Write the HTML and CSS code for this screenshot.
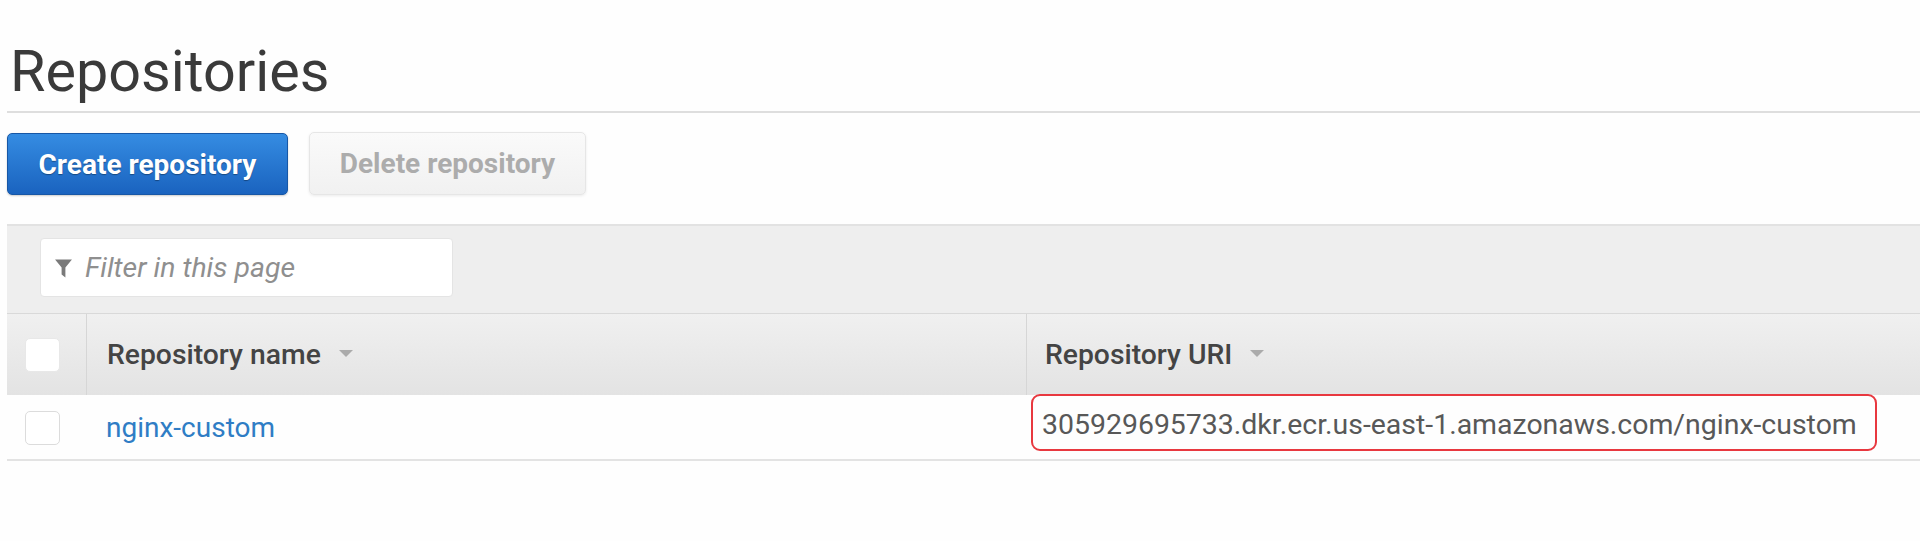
FILE: index.html
```html
<!DOCTYPE html>
<html lang="en">
<head>
<meta charset="utf-8">
<title>Repositories</title>
<link rel="stylesheet" href="styles.css">
</head>
<body>
<div class="page">
  <h1 class="title">Repositories</h1>
  <div class="actions">
    <button class="btn btn-primary">Create repository</button>
    <button class="btn btn-disabled">Delete repository</button>
  </div>
  <div class="table">
    <div class="toolbar">
      <div class="filter">
        <svg class="filter-icon" viewBox="0 0 16 18" width="17" height="19"><path d="M0 0.5 H16 L9.8 8 V17.5 L6.2 14.8 V8 Z" fill="#7a7a7a"/></svg>
        <span class="filter-text">Filter in this page</span>
      </div>
    </div>
    <div class="row head">
      <div class="cell cell-check"><span class="check check-head"></span></div>
      <div class="cell cell-name"><span class="th">Repository name</span><span class="caret"></span></div>
      <div class="cell cell-uri"><span class="th">Repository URI</span><span class="caret"></span></div>
    </div>
    <div class="row data">
      <div class="cell cell-check"><span class="check"></span></div>
      <div class="cell cell-name"><a class="link" href="#">nginx-custom</a></div>
      <div class="cell cell-uri"><span class="uri">305929695733.dkr.ecr.us-east-1.amazonaws.com/nginx-custom</span></div>
    </div>
  </div>
</div>
</body>
</html>
```

FILE: styles.css
```css
* { box-sizing: border-box; }
html, body { margin: 0; padding: 0; background: #fefefe; }
body { font-family: Roboto, "Liberation Sans", Arial, sans-serif; color: #444; overflow: hidden; }

.page { padding-left: 7px; }

.title {
  margin: 38px 0 0;
  padding: 0 0 5px 3px;
  font-size: 57.5px;
  line-height: 68px;
  font-weight: 400;
  color: #3a3a3a;
  border-bottom: 2px solid #dedede;
}

.actions { display: flex; gap: 21px; margin-top: 20px; }

.btn {
  height: 62px;
  padding: 0;
  font-family: Roboto, "Liberation Sans", Arial, sans-serif;
  font-size: 28px;
  font-weight: 700;
  border-radius: 5px;
  display: flex;
  align-items: center;
  justify-content: center;
}
.btn-primary {
  width: 281px;
  color: #fff;
  background: linear-gradient(#358ce2, #1a63bf);
  border: 1px solid #1757a6;
  text-shadow: 0 1px 1px rgba(0,0,0,0.35);
  box-shadow: 0 1px 2px rgba(0,0,0,0.2);
}
.btn-disabled {
  width: 277px;
  height: 63px;
  margin-top: -1px;
  color: #acacac;
  background: linear-gradient(#fafafa, #f1f1f1);
  border: 1px solid #e6e6e6;
  box-shadow: 0 1px 3px rgba(0,0,0,0.08);
}

.table { margin-top: 29px; }

.toolbar {
  height: 89px;
  border-top: 2px solid #e2e2e2;
  background: #eeeeee;
  padding: 12px 0 0 33px;
}
.filter {
  width: 413px;
  height: 59px;
  background: #fff;
  border: 1px solid #e4e4e4;
  border-radius: 4px;
  display: flex;
  align-items: center;
  padding-left: 14px;
  gap: 13px;
}
.filter-icon { flex: none; margin-top: 1px; }
.filter-text {
  font-size: 28.4px;
  font-style: italic;
  color: #8f8f8f;
}

.row {
  display: grid;
  grid-template-columns: 79px 940px 1fr;
}
.head {
  height: 82px;
  border-top: 1px solid #d9d9d9;
  background: linear-gradient(#f0f0f0, #e3e3e3);
}
.data {
  height: 66px;
  border-bottom: 2px solid #e3e3e3;
}
.cell { display: flex; align-items: center; min-width: 0; }
.cell-check { padding-left: 18px; }
.head .cell-name, .head .cell-uri { border-left: 1px solid #d6d6d6; }
.head .cell-name { padding-left: 20px; }
.head .cell-uri { padding-left: 18px; }

.check {
  width: 35px;
  height: 34px;
  background: #fff;
  border: 1px solid #dcdcdc;
  border-radius: 5px;
}
.check-head { border-color: #e8e8e8; }
.data .check { margin-top: 1px; }

.th {
  font-size: 28.3px;
  font-weight: 500;
  color: #444;
}
.caret {
  width: 0;
  height: 0;
  margin-left: 18px;
  margin-top: -3px;
  border-left: 7px solid transparent;
  border-right: 7px solid transparent;
  border-top: 7px solid #ababab;
}

.data .cell-name { padding-left: 20px; }
.link {
  font-size: 28px;
  color: #2f7dc5;
  text-decoration: none;
  margin-top: 0;
}

.data .cell-uri { padding-left: 5px; align-items: flex-start; }
.uri {
  margin-top: -1px;
  height: 57px;
  display: flex;
  align-items: center;
  padding: 3px 18px 0 9px;
  border: 2px solid #e8383f;
  border-radius: 9px;
  font-size: 28.45px;
  color: #585858;
  white-space: nowrap;
}
```
